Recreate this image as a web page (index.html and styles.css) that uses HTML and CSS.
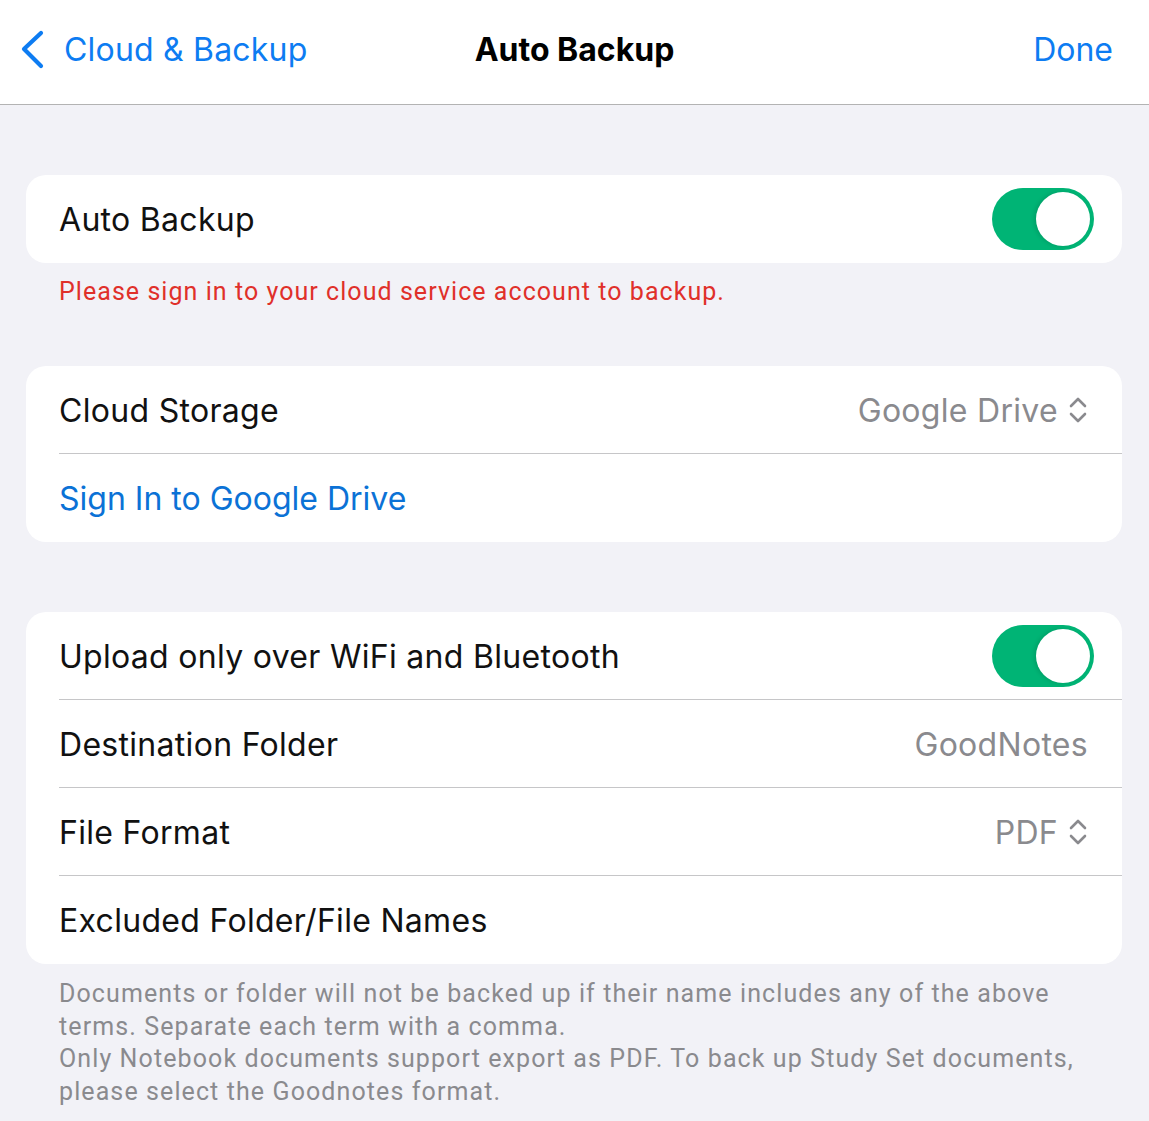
FILE: index.html
```html
<!DOCTYPE html>
<html>
<head>
<meta charset="utf-8">
<link rel="stylesheet" href="styles.css">
</head>
<body>
<header class="nav">
  <div class="nav-left">
    <svg class="back-icon" width="26" height="40" viewBox="0 0 26 40"><path d="M21 3 L4 19 L21 36" fill="none" stroke="#0d7cf2" stroke-width="4.2" stroke-linecap="round" stroke-linejoin="round"/></svg>
    <span class="back-text">Cloud &amp; Backup</span>
  </div>
  <div class="nav-title">Auto Backup</div>
  <div class="nav-right">Done</div>
</header>
<main class="content">
  <section class="card">
    <div class="row">
      <span class="label">Auto Backup</span>
      <span class="toggle"><span class="knob"></span></span>
    </div>
  </section>
  <p class="warning">Please sign in to your cloud service account to backup.</p>

  <section class="card card-2">
    <div class="row sep">
      <span class="label">Cloud Storage</span>
      <span class="value">Google Drive <svg class="updown" width="20" height="28" viewBox="0 0 20 28"><path d="M3 10 L10 3 L17 10 M3 18 L10 25 L17 18" fill="none" stroke="#8a8a8e" stroke-width="2.6" stroke-linecap="round" stroke-linejoin="round"/></svg></span>
    </div>
    <div class="row">
      <span class="label link">Sign In to Google Drive</span>
    </div>
  </section>

  <section class="card card-3">
    <div class="row sep">
      <span class="label">Upload only over WiFi and Bluetooth</span>
      <span class="toggle"><span class="knob"></span></span>
    </div>
    <div class="row sep">
      <span class="label">Destination Folder</span>
      <span class="value">GoodNotes</span>
    </div>
    <div class="row sep">
      <span class="label">File Format</span>
      <span class="value">PDF <svg class="updown" width="20" height="28" viewBox="0 0 20 28"><path d="M3 10 L10 3 L17 10 M3 18 L10 25 L17 18" fill="none" stroke="#8a8a8e" stroke-width="2.6" stroke-linecap="round" stroke-linejoin="round"/></svg></span>
    </div>
    <div class="row">
      <span class="label">Excluded Folder/File Names</span>
    </div>
  </section>
  <p class="footnote">Documents or folder will not be backed up if their name includes any of the above terms. Separate each term with a comma.<br>Only Notebook documents support export as PDF. To back up Study Set documents, please select the Goodnotes format.</p>
</main>
</body>
</html>
```

FILE: styles.css
```css
html, body {
  margin: 0;
  padding: 0;
}
body {
  background: #f2f2f7;
  font-family: "Inter", "Roboto", sans-serif;
  width: 1149px;
  height: 1121px;
  overflow: hidden;
}
.nav {
  height: 105px;
  box-sizing: border-box;
  background: #ffffff;
  border-bottom: 1px solid #b3b3b3;
  display: grid;
  grid-template-columns: 1fr auto 1fr;
  align-items: center;
  padding: 0 20px 6px 20px;
}
.nav-left {
  display: flex;
  align-items: center;
  gap: 18px;
  color: #0d7cf2;
  font-size: 32px;
  letter-spacing: 0.2px;
}
.back-icon {
  display: block;
  margin-top: 2px;
}
.nav-title {
  font-size: 32px;
  font-weight: 700;
  color: #000;
}
.nav-right {
  justify-self: end;
  padding-right: 16px;
  font-size: 32px;
  color: #0d7cf2;
}
.content {
  padding: 70px 27px 0 26px;
}
.card {
  background: #ffffff;
  border-radius: 20px;
  overflow: hidden;
}
.row {
  height: 88px;
  display: flex;
  align-items: center;
  justify-content: space-between;
  padding: 0 28px 0 33px;
  position: relative;
}
.row.sep::after {
  content: "";
  position: absolute;
  left: 33px;
  right: 0;
  bottom: 0;
  height: 1px;
  background: #c6c6c8;
}
.label {
  font-size: 32px;
  letter-spacing: 0.3px;
  color: #111;
}
.label.link {
  color: #0b72d6;
  letter-spacing: 0;
}
.value {
  font-size: 32px;
  letter-spacing: 0.3px;
  color: #8a8a8e;
  display: flex;
  align-items: center;
  gap: 10px;
  padding-right: 6px;
}
.updown {
  display: block;
}
.toggle {
  width: 102px;
  height: 62px;
  border-radius: 31px;
  background: #00b475;
  display: flex;
  align-items: center;
  justify-content: flex-end;
  padding: 0 4px;
  box-sizing: border-box;
}
.knob {
  width: 54px;
  height: 54px;
  border-radius: 50%;
  background: #ffffff;
  box-shadow: -2px 0 4px rgba(0, 0, 0, 0.12);
}
.warning {
  margin: 0;
  padding: 14px 33px 0;
  height: 103px;
  box-sizing: border-box;
  font-family: "Roboto", sans-serif;
  font-size: 25px;
  letter-spacing: 1.05px;
  color: #e0302a;
}
.card-3 {
  margin-top: 70px;
}
.footnote {
  margin: 0;
  padding: 14px 33px 0;
  font-family: "Roboto", sans-serif;
  font-size: 25px;
  line-height: 32.5px;
  letter-spacing: 1.1px;
  color: #8a8a8e;
}
```
